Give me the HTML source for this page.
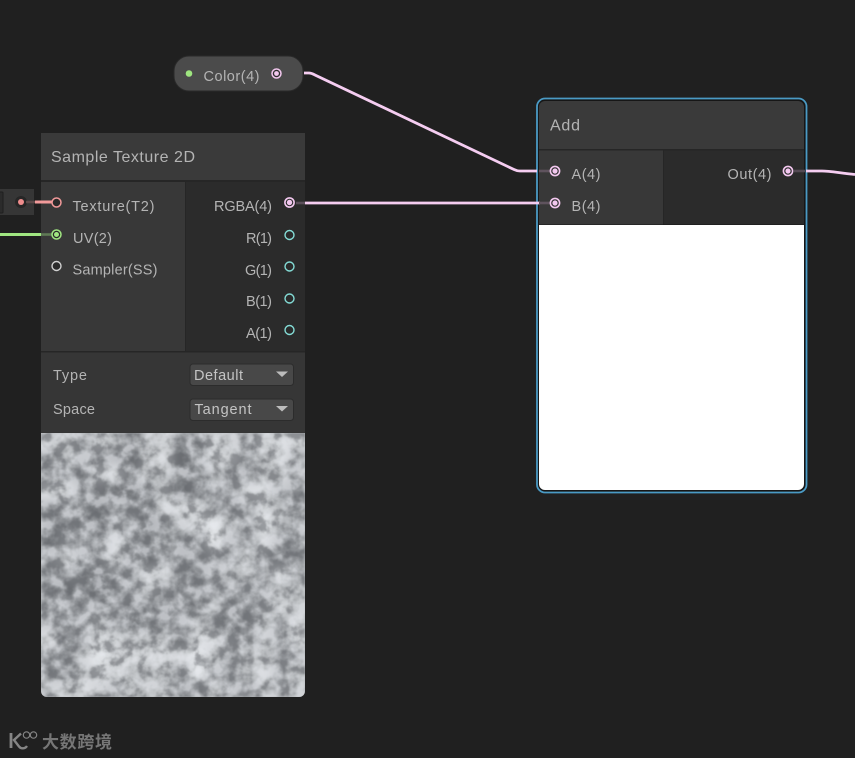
<!DOCTYPE html>
<html><head><meta charset="utf-8"><title>Shader Graph</title>
<style>
html,body{margin:0;padding:0;background:#202020;width:855px;height:758px;overflow:hidden}
svg{display:block}
text{font-family:"Liberation Sans","Noto Sans CJK SC",sans-serif;fill:#b4b4b4;font-size:14.5px}
</style></head><body>
<svg width="855" height="758" viewBox="0 0 855 758" xmlns="http://www.w3.org/2000/svg">
<defs>
<filter id="soft" x="-10%" y="-10%" width="120%" height="120%" color-interpolation-filters="sRGB">
<feGaussianBlur stdDeviation="0.28"/>
</filter>
<filter id="gd" x="0" y="0" width="100%" height="100%" color-interpolation-filters="sRGB">
<feTurbulence type="fractalNoise" baseFrequency="0.075" numOctaves="4" seed="11"/>
<feColorMatrix values="0 0 0 0 0.33  0 0 0 0 0.34  0 0 0 0 0.36  5 0 0 0 -2.5"/>
<feGaussianBlur stdDeviation="0.6"/>
</filter>
<filter id="gl" x="0" y="0" width="100%" height="100%" color-interpolation-filters="sRGB">
<feTurbulence type="fractalNoise" baseFrequency="0.075" numOctaves="4" seed="11"/>
<feColorMatrix values="0 0 0 0 0.92  0 0 0 0 0.93  0 0 0 0 0.95  -5 0 0 0 2.5"/>
<feGaussianBlur stdDeviation="0.6"/>
</filter>
<clipPath id="tex"><path d="M41 433H305V691a6 6 0 0 1-6 6H47a6 6 0 0 1-6-6Z"/></clipPath>
</defs>
<rect width="855" height="758" fill="#202020"/>

<!-- left stub node -->
<rect x="0" y="189" width="34" height="26" fill="#363636"/>
<path d="M0 192H2a1 1 0 0 1 1 1V212a1 1 0 0 1-1 1H0" fill="#2b2b2b" stroke="#1f1f1f"/>
<circle cx="21" cy="202" r="6" fill="#262626"/>
<circle cx="21" cy="202" r="3" fill="#f08d8d"/>
<path d="M26 202H35" stroke="#5d4a4a" stroke-width="2.500"/>
<path d="M35 202H41" stroke="#f29a9a" stroke-width="3"/>
<path d="M0 234.500H41" stroke="#a0e681" stroke-width="3"/>

<!-- Sample Texture node -->
<rect x="41" y="133" width="264" height="47" fill="#3a3a3a"/>
<rect x="41" y="180" width="264" height="2" fill="#262626"/>
<rect x="41" y="182" width="144" height="169" fill="#383838"/>
<rect x="185" y="182" width="1" height="169" fill="#262626"/>
<rect x="186" y="182" width="119" height="169" fill="#2b2b2b"/>
<rect x="41" y="351" width="264" height="1.500" fill="#262626"/>
<rect x="41" y="352.500" width="264" height="80.500" fill="#363636"/>

<path d="M41 202H52" stroke="#f29a9a" stroke-width="3"/>
<path d="M41 234.500H52" stroke="#5f7a55" stroke-width="2.600"/>
<circle cx="56.500" cy="202.500" r="4.500" fill="#2a2a2a" stroke="#f29a9a" stroke-width="1.500"/>
<circle cx="56.500" cy="234.500" r="4.500" fill="#2a2a2a" stroke="#a0e681" stroke-width="1.500"/>
<circle cx="56.500" cy="234.500" r="2.500" fill="#a0e681"/>
<circle cx="56.500" cy="266" r="4.500" fill="#2a2a2a" stroke="#d0d0d0" stroke-width="1.400"/>

<circle cx="289.500" cy="202.500" r="4.600" fill="#2a2a2a" stroke="#f3c8ef" stroke-width="1.600"/>
<circle cx="289.500" cy="202.500" r="2.700" fill="#f3c8ef"/>
<g fill="#2a2a2a" stroke="#84dcd6" stroke-width="1.400">
<circle cx="289.500" cy="235" r="4.500"/><circle cx="289.500" cy="266.500" r="4.500"/><circle cx="289.500" cy="298.500" r="4.500"/><circle cx="289.500" cy="330" r="4.500"/>
</g>

<text x="51" y="162" style="font-size:16px" textLength="144" lengthAdjust="spacing">Sample Texture 2D</text>
<text x="72.500" y="211" textLength="82">Texture(T2)</text>
<text x="73" y="243" textLength="39">UV(2)</text>
<text x="72.500" y="274.500" textLength="85">Sampler(SS)</text>
<text x="214" y="211" textLength="58">RGBA(4)</text>
<text x="246" y="243" textLength="26">R(1)</text>
<text x="245" y="275" textLength="27">G(1)</text>
<text x="246" y="306" textLength="26">B(1)</text>
<text x="246" y="338" textLength="26">A(1)</text>
<text x="53" y="380" textLength="34">Type</text>
<text x="53" y="414" textLength="42">Space</text>

<rect x="190" y="364" width="103.500" height="21.500" rx="3" fill="#484848" stroke="#2c2c2c"/>
<rect x="190" y="399" width="103.500" height="21.500" rx="3" fill="#484848" stroke="#2c2c2c"/>
<text x="194" y="380" textLength="49" style="font-size:14.500px;fill:#c4c4c4">Default</text>
<text x="194.500" y="414" textLength="57" style="font-size:14.500px;fill:#c4c4c4">Tangent</text>
<path d="M276 371.500H288L282 377Z" fill="#bcbcbc"/>
<path d="M276 406H288L282 411.500Z" fill="#bcbcbc"/>

<!-- Texture preview -->
<g clip-path="url(#tex)">
<rect x="41" y="433" width="264" height="264" fill="#b9bcbf"/>
<svg x="41" y="433" width="264" height="264" viewBox="0 0 16 16">
<g filter="url(#soft)" fill="none" stroke-width="1.020">
<rect x="0" y="0" width="16" height="16" fill="#b9bcbf"/>
<path stroke="#7d8084" d="M5 1.500h1M8 1.500h1M4 3.500h2M8 3.500h1M3 4.500h1M6 5.500h1M0 6.500h1M6 7.500h1M3 8.500h1M1 9.500h1M3 9.500h1M5 11.500h1"/>
<path stroke="#919498" d="M5 .5h1M8 .5h2M0 1.500h1M4 1.500h1M2 2.500h1M8 2.500h2M12 2.500h1M3 3.500h1M9 3.500h1M15 3.500h1M0 4.500h1M2 4.500h1M5 4.500h2M11 4.500h1M15 4.500h1M0 5.500h4M7 5.500h1M6 6.500h1M8 6.500h1M15 6.500h1M5 7.500h1M8 7.500h2M14 7.500h2M0 8.500h1M2 8.500h1M4 8.500h1M8 8.500h2M0 9.500h1M2 9.500h1M4 9.500h1M8 9.500h2M2 10.500h1M5 10.500h1M7 10.500h3M11 10.500h2M1 11.500h1M6 11.500h2M10 11.500h3M1 12.500h1M8 12.500h1M12 12.500h1M0 13.500h2M0 14.500h1M8 15.500h2M12 15.500h1"/>
<path stroke="#a5a8ac" d="M2 .5h1M12 .5h1M2 1.500h2M9 1.500h1M12 1.500h1M15 1.500h1M0 2.500h2M5 2.500h1M11 2.500h1M15 2.500h1M2 3.500h1M6 3.500h1M10 3.500h2M14 3.500h1M1 4.500h1M4 4.500h1M10 4.500h1M12 4.500h1M4 5.500h2M12 5.500h1M15 5.500h1M1 6.500h3M5 6.500h1M9 6.500h1M11 6.500h2M14 6.500h1M0 7.500h1M2 7.500h2M7 7.500h1M10 7.500h2M13 7.500h1M1 8.500h1M5 8.500h1M10 8.500h1M13 8.500h1M15 8.500h1M5 9.500h1M7 9.500h1M10 9.500h4M0 10.500h2M3 10.500h2M6 10.500h1M13 10.500h1M0 11.500h1M2 11.500h1M4 11.500h1M8 11.500h1M14 11.500h1M2 12.500h1M11 12.500h1M14 12.500h1M11 13.500h1M14 13.500h2M1 14.500h1M8 14.500h1M10 14.500h2M14 14.500h1M4 15.500h1M11 15.500h1M14 15.500h1"/>
<path stroke="#cdd0d3" d="M0 .5h1M3 .5h1M7 .5h1M10 .5h1M13 .5h3M7 1.500h1M10 1.500h2M14 1.500h1M3 2.500h2M0 3.500h2M12 3.500h2M7 4.500h3M13 4.500h1M9 5.500h1M4 6.500h1M13 6.500h1M4 7.500h1M6 8.500h2M14 8.500h1M14 10.500h1M15 11.500h1M0 12.500h1M3 12.500h2M9 12.500h2M15 12.500h1M4 13.500h5M3 14.500h2M13 14.500h1M2 15.500h1"/>
<path stroke="#e1e4e7" d="M10 5.500h1M13 5.500h1M10 6.500h1M3 13.500h1M9 13.500h1M9 14.500h1"/>
</g>
</svg>
<rect x="41" y="433" width="264" height="264" filter="url(#gd)" opacity="0.5"/>
<rect x="41" y="433" width="264" height="264" filter="url(#gl)" opacity="0.5"/>
</g>

<!-- Color node -->
<rect x="174" y="56" width="129" height="35" rx="15" fill="#4b4b4b" stroke="#2a2a2a" stroke-width="1"/>
<circle cx="189" cy="73.500" r="3.300" fill="#9ee57f"/>
<text x="203.500" y="81" textLength="56">Color(4)</text>
<circle cx="276.500" cy="73.500" r="4.500" fill="#2f2f2f" stroke="#f3c8ef" stroke-width="1.500"/>
<circle cx="276.500" cy="73.500" r="2.400" fill="#f3c8ef"/>

<!-- Add node -->
<rect x="537" y="98.500" width="269.500" height="394" rx="8" fill="#161616" stroke="#4a9ac4" stroke-width="1.800"/>
<path d="M539 107a6 6 0 0 1 6-6H798a6 6 0 0 1 6 6V149H539Z" fill="#3a3a3a"/>
<rect x="539" y="149" width="265" height="1.500" fill="#262626"/>
<rect x="539" y="150.500" width="124" height="74" fill="#383838"/>
<rect x="663" y="150.500" width="1" height="74" fill="#262626"/>
<rect x="664" y="150.500" width="140" height="74" fill="#2b2b2b"/>
<path d="M539 225H804V484a6 6 0 0 1-6 6H545a6 6 0 0 1-6-6Z" fill="#ffffff"/>
<text x="550" y="130.500" style="font-size:16px" textLength="30">Add</text>
<text x="571.500" y="179" textLength="29">A(4)</text>
<text x="571.500" y="211" textLength="29">B(4)</text>
<text x="727.500" y="179" textLength="44">Out(4)</text>

<!-- Wires -->
<g fill="none" stroke-linejoin="round">
<path d="M304 73H309C312 73 313 74 316 75.500L514 169.500C516 170.500 517 171 520 171H537" stroke="#f5cdf1" stroke-width="2.800"/>
<path d="M305 203H540" stroke="#f5cdf1" stroke-width="2.800"/>
<path d="M296 203H305" stroke="#5b4f5a" stroke-width="2.600"/>
<path d="M539 171H551" stroke="#5f535e" stroke-width="2.600"/>
<path d="M539 203H551" stroke="#5f535e" stroke-width="2.600"/>
<path d="M794 171H805" stroke="#544a54" stroke-width="2.600"/>
<path d="M806 171H822C830 171 840 173 855 174.500" stroke="#f5cdf1" stroke-width="2.800"/>
</g>
<circle cx="555" cy="171" r="4.600" fill="#2f2f2f" stroke="#f3c8ef" stroke-width="1.600"/><circle cx="555" cy="171" r="2.600" fill="#f3c8ef"/>
<circle cx="555" cy="203" r="4.600" fill="#2f2f2f" stroke="#f3c8ef" stroke-width="1.600"/><circle cx="555" cy="203" r="2.600" fill="#f3c8ef"/>
<circle cx="788" cy="171" r="4.600" fill="#2a2a2a" stroke="#f3c8ef" stroke-width="1.600"/><circle cx="788" cy="171" r="2.600" fill="#f3c8ef"/>

<!-- Watermark -->
<g fill="none" stroke="#858585">
<path d="M11 733V748" stroke-width="2.800"/>
<path d="M21 733.500L14 740L19 746.500C21 749 25 749 27 746" stroke-width="2.400"/>
<circle cx="26.500" cy="735" r="3.200" stroke-width="1.200"/>
<circle cx="33.500" cy="735" r="3.200" stroke-width="1.200"/>
</g>
<text x="42" y="748" style="font-size:17px;font-weight:700;fill:#767676" textLength="70">大数跨境</text>
</svg>
</body></html>
